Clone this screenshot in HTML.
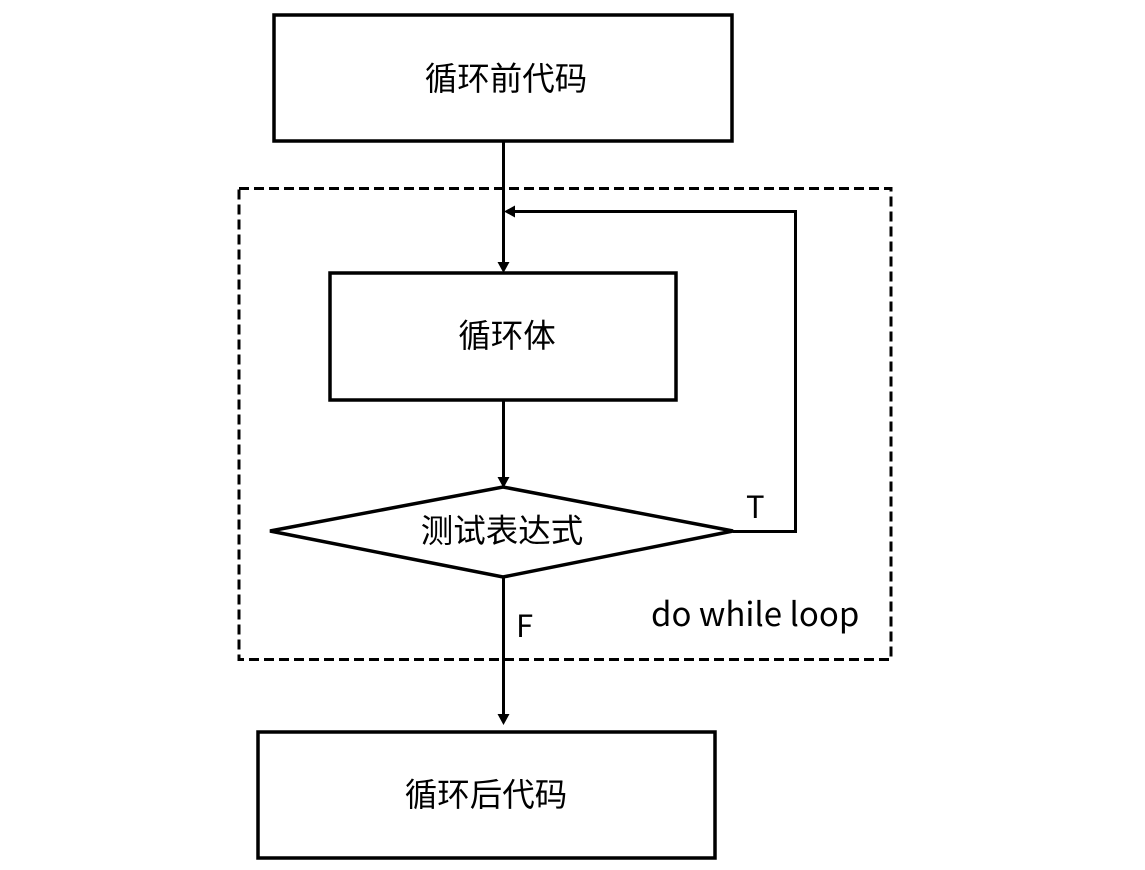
<!DOCTYPE html>
<html><head><meta charset="utf-8"><style>html,body{margin:0;padding:0;background:#fff;}svg{display:block}</style></head>
<body>
<svg width="1145" height="870" viewBox="0 0 1145 870" xmlns="http://www.w3.org/2000/svg" font-family="'Noto Sans CJK SC','Liberation Sans',sans-serif">
<rect x="0" y="0" width="1145" height="870" fill="#fff"/>
<rect x="239" y="188.5" width="652" height="471" fill="none" stroke="#000" stroke-width="3" stroke-dasharray="10,5"/>
<rect x="274" y="15" width="458" height="126" fill="none" stroke="#000" stroke-width="3.5"/>
<rect x="330" y="273" width="346" height="127" fill="none" stroke="#000" stroke-width="3.5"/>
<rect x="258" y="732" width="457" height="126" fill="none" stroke="#000" stroke-width="3.5"/>
<polygon points="270,531 503,487 733,531 503,577" fill="none" stroke="#000" stroke-width="3.5" stroke-linejoin="miter"/>
<g stroke="#000" stroke-width="3" fill="none">
<line x1="503.5" y1="141" x2="503.5" y2="264"/>
<line x1="503.5" y1="400" x2="503.5" y2="479"/>
<line x1="503.5" y1="577" x2="503.5" y2="717"/>
<polyline points="733,531.5 795.5,531.5 795.5,211.5 513,211.5"/>
</g>
<g fill="#000">
<polygon points="497.5,262 509.5,262 503.5,273"/>
<polygon points="497.5,477 509.5,477 503.5,488"/>
<polygon points="497.5,714 509.5,714 503.5,725"/>
<polygon points="515,205.5 515,217.5 504,211.5"/>
</g>
<g fill="#000" text-anchor="middle" font-size="32.5">
<text x="506" y="90">循环前代码</text>
<text x="507" y="347">循环体</text>
<text x="502" y="542">测试表达式</text>
<text x="486" y="806">循环后代码</text>
</g>
<g fill="#000" font-size="31">
<text x="746" y="518">T</text>
<text x="516" y="637">F</text>
</g>
<text x="651" y="626" fill="#000" font-size="33">do while loop</text>
</svg>
</body></html>
